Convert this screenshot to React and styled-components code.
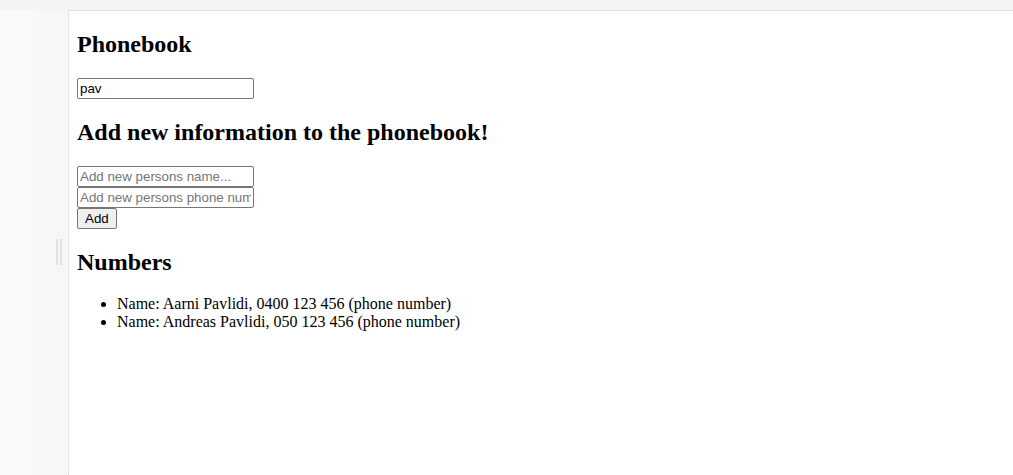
import React, { useState } from 'react';
import styled, { createGlobalStyle } from 'styled-components';

const GlobalStyle = createGlobalStyle`
  html, body {
    margin: 0;
    padding: 0;
    height: 100%;
  }

  body {
    background: #f4f4f4;
    font-family: 'Liberation Serif', 'Times New Roman', serif;
  }
`;

const Page = styled.div`
  display: flex;
  flex-direction: column;
  height: 100vh;
  background: #f4f4f4;
`;

const TopStrip = styled.div`
  height: 10px;
  flex-shrink: 0;
`;

const Workspace = styled.div`
  display: flex;
  flex: 1;
  min-height: 0;
`;

const Gutter = styled.div`
  width: 68px;
  flex-shrink: 0;
  display: flex;
  align-items: center;
  justify-content: flex-end;
  padding-right: 6px;
  padding-top: 18px;
  box-sizing: border-box;
  background: linear-gradient(to right, #fafafa, #f6f6f6);
`;

const Handle = styled.div`
  width: 6px;
  height: 26px;
  border-left: 2px solid #e2e2e2;
  border-right: 2px solid #e2e2e2;
  box-sizing: border-box;
`;

const Preview = styled.div`
  flex: 1;
  background: #fff;
  border-top: 1px solid #e3e3e3;
  border-left: 1px solid #e3e3e3;
  padding: 0 8px;
  color: #000;
  overflow: hidden;
`;

const Title = styled.h2`
  font-size: 1.5em;
  font-weight: bold;
  margin: 0.83em 0;
`;

const Field = styled.input`
  display: block;
  font-family: 'Liberation Sans', Arial, sans-serif;
  font-size: 13.333px;
  width: 177px;
  height: 21px;
  box-sizing: border-box;
  padding: 1px 2px;
  margin: 0;
  border: 1px solid #767676;
  border-radius: 2px;
  color: #000;

  &::placeholder {
    color: #757575;
  }
`;

const AddButton = styled.button`
  font-family: 'Liberation Sans', Arial, sans-serif;
  font-size: 13.333px;
  height: 21px;
  padding: 1px 7px;
  margin: 0;
  background: #efefef;
  border: 1px solid #767676;
  border-radius: 2px;
  color: #000;
`;

const List = styled.ul`
  margin: 16px 0;
  padding-left: 40px;
  font-size: 16px;
  line-height: 18px;
`;

const people = [
  { name: 'Aarni Pavlidi', number: '0400 123 456' },
  { name: 'Andreas Pavlidi', number: '050 123 456' },
];

export default function App() {
  const [filter, setFilter] = useState('pav');

  return (
    <>
      <GlobalStyle />
      <Page>
        <TopStrip />
        <Workspace>
          <Gutter>
            <Handle />
          </Gutter>
          <Preview>
            <Title>Phonebook</Title>
            <Field value={filter} onChange={(e) => setFilter(e.target.value)} />
            <Title>Add new information to the phonebook!</Title>
            <form onSubmit={(e) => e.preventDefault()}>
              <Field placeholder="Add new persons name..." />
              <Field placeholder="Add new persons phone number..." />
              <AddButton type="submit">Add</AddButton>
            </form>
            <Title>Numbers</Title>
            <List>
              {people.map((p) => (
                <li key={p.name}>
                  Name: {p.name}, {p.number} (phone number)
                </li>
              ))}
            </List>
          </Preview>
        </Workspace>
      </Page>
    </>
  );
}
